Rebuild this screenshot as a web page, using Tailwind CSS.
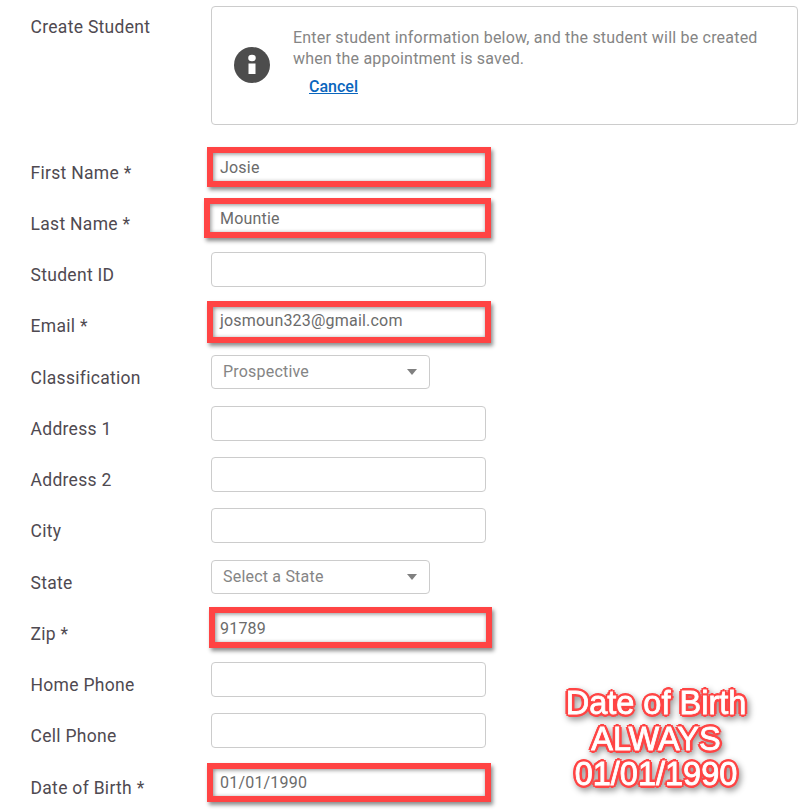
<!DOCTYPE html>
<html lang="en">
<head>
  <meta charset="UTF-8">
  <title>Create Student</title>
  <script src="https://cdn.jsdelivr.net/npm/@tailwindcss/browser@4"></script>
</head>
<body class="bg-white font-['Roboto',sans-serif] text-[17.5px] tracking-[.3px] text-[#4f4a51] overflow-hidden">
  <div class="relative w-[806px] h-[812px] overflow-hidden">
    <!-- notice -->
    <div class="flex pt-1.5 pl-[30.5px] h-[149.6px]">
      <div class="w-[180.5px] pt-[8px] leading-[26px]">Create Student</div>
      <div class="w-[587px] h-[119px] border border-[#ccc] rounded flex items-start pl-[22px] pt-[20px] tracking-[.2px]">
        <svg class="w-9 h-9 mt-[20px] shrink-0" viewBox="0 0 36 36">
          <circle cx="18" cy="18" r="18" fill="#4d4d4d"/>
          <ellipse cx="18" cy="11" rx="3.8" ry="3.2" fill="#fff"/>
          <rect x="14.5" y="16.5" width="7" height="10.5" fill="#fff"/>
        </svg>
        <div class="ml-[23px] text-base leading-[21px] text-[#858585]">
          <p>Enter student information below, and the student will be created<br>when the appointment is saved.</p>
          <a href="#" class="block ml-4 mt-[7px] font-medium tracking-normal text-[#0a66bd] underline">Cancel</a>
        </div>
      </div>
    </div>

    <!-- fields -->
    <div class="pl-[30.5px]">
      <div class="flex items-center h-[51.25px]">
        <label class="w-[180.5px] pt-[11px] -mt-[16px]">First Name *</label>
        <div class="relative w-[275px] h-[35px] -mt-[16px] pl-[9px] text-base tracking-[.2px] leading-[35px] text-[#6b6b6b]">Josie
          <div class="absolute left-[-4px] top-[-3px] w-[284px] h-[40px] border-[6px] border-[#ff4444] shadow-[2px_3px_4px_rgba(0,0,0,.45),inset_1px_1px_4px_rgba(0,0,0,.45)]"></div>
        </div>
      </div>
      <div class="flex items-center h-[51.25px]">
        <label class="w-[180.5px] pt-[11px] -mt-[16px]">Last Name *</label>
        <div class="relative w-[275px] h-[35px] -mt-[16px] pl-[9px] text-base tracking-[.2px] leading-[35px] text-[#6b6b6b]">Mountie
          <div class="absolute left-[-7px] top-[-3px] w-[287px] h-[40px] border-[6px] border-[#ff4444] shadow-[2px_3px_4px_rgba(0,0,0,.45),inset_1px_1px_4px_rgba(0,0,0,.45)]"></div>
        </div>
      </div>
      <div class="flex items-center h-[51.25px]">
        <label class="w-[180.5px] pt-[11px] -mt-[16px]">Student ID</label>
        <div class="w-[275px] h-[35px] -mt-[16px] border border-[#ccc] rounded"></div>
      </div>
      <div class="flex items-center h-[51.25px]">
        <label class="w-[180.5px] pt-[11px] -mt-[16px]">Email *</label>
        <div class="relative w-[275px] h-[35px] -mt-[16px] pl-[9px] text-base tracking-[.2px] leading-[35px] text-[#6b6b6b]">josmoun323@gmail.com
          <div class="absolute left-[-4px] top-[-2px] w-[284px] h-[42px] border-[6px] border-[#ff4444] shadow-[2px_3px_4px_rgba(0,0,0,.45),inset_1px_1px_4px_rgba(0,0,0,.45)]"></div>
        </div>
      </div>
      <div class="flex items-center h-[51.25px]">
        <label class="w-[180.5px] pt-[11px] -mt-[16px]">Classification</label>
        <div class="flex items-center justify-between w-[219px] h-[34px] -mt-[16px] pl-[11px] pr-[12px] border border-[#ccc] rounded text-base tracking-[.2px] text-[#858585]">Prospective
          <span class="w-0 h-0 border-x-[5px] border-x-transparent border-t-[6px] border-t-[#808080]"></span>
        </div>
      </div>
      <div class="flex items-center h-[51.25px]">
        <label class="w-[180.5px] pt-[11px] -mt-[16px]">Address 1</label>
        <div class="w-[275px] h-[35px] -mt-[16px] border border-[#ccc] rounded"></div>
      </div>
      <div class="flex items-center h-[51.25px]">
        <label class="w-[180.5px] pt-[11px] -mt-[16px]">Address 2</label>
        <div class="w-[275px] h-[35px] -mt-[16px] border border-[#ccc] rounded"></div>
      </div>
      <div class="flex items-center h-[51.25px]">
        <label class="w-[180.5px] pt-[11px] -mt-[16px]">City</label>
        <div class="w-[275px] h-[35px] -mt-[16px] border border-[#ccc] rounded"></div>
      </div>
      <div class="flex items-center h-[51.25px]">
        <label class="w-[180.5px] pt-[11px] -mt-[16px]">State</label>
        <div class="flex items-center justify-between w-[219px] h-[34px] -mt-[16px] pl-[11px] pr-[12px] border border-[#ccc] rounded text-base tracking-[.2px] text-[#858585]">Select a State
          <span class="w-0 h-0 border-x-[5px] border-x-transparent border-t-[6px] border-t-[#808080]"></span>
        </div>
      </div>
      <div class="flex items-center h-[51.25px]">
        <label class="w-[180.5px] pt-[11px] -mt-[16px]">Zip *</label>
        <div class="relative w-[275px] h-[35px] -mt-[16px] pl-[9px] text-base tracking-[.2px] leading-[35px] text-[#6b6b6b]">91789
          <div class="absolute left-[-2px] top-[-4px] w-[283px] h-[41px] border-[6px] border-[#ff4444] shadow-[2px_3px_4px_rgba(0,0,0,.45),inset_1px_1px_4px_rgba(0,0,0,.45)]"></div>
        </div>
      </div>
      <div class="flex items-center h-[51.25px]">
        <label class="w-[180.5px] pt-[11px] -mt-[16px]">Home Phone</label>
        <div class="w-[275px] h-[35px] -mt-[16px] border border-[#ccc] rounded"></div>
      </div>
      <div class="flex items-center h-[51.25px]">
        <label class="w-[180.5px] pt-[11px] -mt-[16px]">Cell Phone</label>
        <div class="w-[275px] h-[35px] -mt-[16px] border border-[#ccc] rounded"></div>
      </div>
      <div class="flex items-center h-[51.25px]">
        <label class="w-[180.5px] pt-[11px] -mt-[16px]">Date of Birth *</label>
        <div class="relative w-[275px] h-[35px] -mt-[16px] pl-[9px] text-base tracking-[.2px] leading-[35px] text-[#6b6b6b]">01/01/1990
          <div class="absolute left-[-4px] top-[-2px] w-[284px] h-[39px] border-[6px] border-[#ff4444] shadow-[2px_3px_4px_rgba(0,0,0,.45),inset_1px_1px_4px_rgba(0,0,0,.45)]"></div>
        </div>
      </div>
    </div>

    <!-- annotation -->
    <div class="absolute left-[556px] top-[686px] w-[200px] text-center font-['Liberation_Sans',sans-serif] text-[32.5px] tracking-normal leading-[35.5px] text-white [-webkit-text-stroke:.8px_#fff] [text-shadow:3px_0_#f44,-3px_0_#f44,0_3px_#f44,0_-3px_#f44,2px_2px_#f44,-2px_2px_#f44,2px_-2px_#f44,-2px_-2px_#f44] drop-shadow-[2px_3px_3px_rgba(0,0,0,.4)]">Date of Birth<br>ALWAYS<br>01/01/1990</div>
  </div>
</body>
</html>
